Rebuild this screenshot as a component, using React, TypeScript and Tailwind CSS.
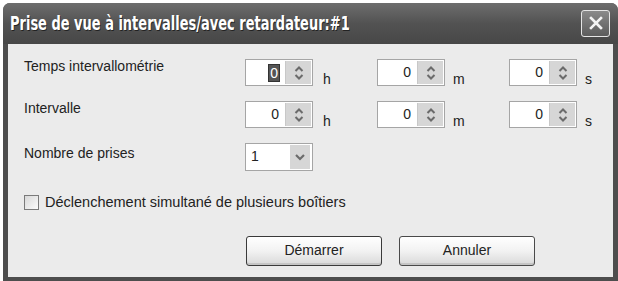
import { useState } from "react";

const ui = { fontFamily: '"Liberation Sans", Arial, sans-serif' };

const Spinner = ({ value, focused }: { value: string; focused?: boolean }) => (
  <div className="flex h-[27px] w-[68px] border border-[#a5a5a5] bg-white">
    <div className="flex flex-1 items-center justify-end pr-[5px] text-[14px] text-[#222]">
      {focused ? (
        <span className="bg-[#555] px-[1px] leading-[16px] text-white outline outline-1 outline-[#333]">{value}</span>
      ) : (
        value
      )}
    </div>
    <div className="m-[1px] flex w-[26px] flex-col items-center justify-center border-l border-[#c8c8c8] bg-[#d6d6d6]">
      <svg width="12" height="16" viewBox="0 0 12 16" fill="none" stroke="#6b6b6b" strokeWidth="2">
        <path d="M2.5 6 L6 2.5 L9.5 6" />
        <path d="M2.5 10 L6 13.5 L9.5 10" />
      </svg>
    </div>
  </div>
);

const Unit = ({ u }: { u: string }) => (
  <span className="mt-[13px] w-[10px] text-[14px] leading-none text-[#222]">{u}</span>
);

const SpinRow = ({ label, first }: { label: string; first?: boolean }) => (
  <div className="flex h-[27px] items-center">
    <span className="w-[221px] -translate-y-[6px] text-[14px] text-[#222]">{label}</span>
    <div className="flex gap-[10px]">
      <Spinner value="0" focused={first} />
      <Unit u="h" />
    </div>
    <div className="ml-[44px] flex gap-[8px]">
      <Spinner value="0" />
      <Unit u="m" />
    </div>
    <div className="ml-[46px] flex gap-[8px]">
      <Spinner value="0" />
      <Unit u="s" />
    </div>
  </div>
);

export default function App() {
  const [checked, setChecked] = useState(false);
  return (
    <div className="h-[281px] w-[618px] bg-white pl-[3px] pt-[3px]" style={ui}>
      <div className="flex h-[278px] w-[615px] flex-col overflow-hidden rounded-t-[7px] bg-[#4d4d4d]">
        <div className="flex h-[41px] items-center justify-between bg-gradient-to-b from-[#6e6e6e] via-[#525252] to-[#474747] pl-[7px] pr-[8px]">
          <span
            className="origin-left scale-x-[0.76] whitespace-nowrap text-[19px] font-bold text-white [text-shadow:1px_1px_0_#222]"
            style={{ fontFamily: '"Liberation Sans Narrow", "DejaVu Sans Condensed", sans-serif' }}
          >
            Prise de vue à intervalles/avec retardateur:#1
          </span>
          <div className="mb-[1px] flex h-[27px] w-[29px] items-center justify-center rounded-[3px] border border-[#e5e5e5] bg-gradient-to-b from-[#8a8a8a] to-[#5c5c5c]">
            <svg width="16" height="16" viewBox="0 0 16 16" stroke="#f2f2f2" strokeWidth="2.6" strokeLinecap="square">
              <path d="M3 3 L13 13 M13 3 L3 13" />
            </svg>
          </div>
        </div>
        <div className="mx-[5px] mb-[4px] flex flex-1 flex-col bg-[#ebebeb] pl-[16px] pt-[15px]">
          <div className="flex flex-col gap-[15px]">
            <SpinRow label="Temps intervallométrie" first />
            <SpinRow label="Intervalle" />
            <div className="flex h-[28px] items-center">
              <span className="w-[221px] -translate-y-[4px] text-[14px] text-[#222]">Nombre de prises</span>
              <div className="flex h-[28px] w-[68px] border border-[#a5a5a5] bg-white">
                <div className="flex flex-1 items-end pb-[3px] pl-[5px] text-[14px] text-[#222]">1</div>
                <div className="m-[1px] mr-[2px] flex w-[20px] items-center justify-center bg-[#d6d6d6]">
                  <svg width="12" height="10" viewBox="0 0 12 10" fill="none" stroke="#6b6b6b" strokeWidth="2.2">
                    <path d="M2 3 L6 7 L10 3" />
                  </svg>
                </div>
              </div>
            </div>
          </div>
          <label className="mt-[21px] flex items-center gap-[6px] text-[14.5px] text-[#222]">
            <span
              onClick={() => setChecked(!checked)}
              className="h-[15px] w-[15px] border border-[#7a7a7a] bg-gradient-to-br from-[#d8d8d8] to-[#fbfbfb] text-center text-[11px] leading-[13px]"
            >
              {checked ? "✓" : ""}
            </span>
            Déclenchement simultané de plusieurs boîtiers
          </label>
          <div className="mt-[22px] flex gap-[17px] pl-[222px]">
            <button className="h-[30px] w-[136px] rounded-[3px] border border-[#3a3a3a] bg-gradient-to-b from-[#ffffff] via-[#f2f2f2] to-[#d9d9d9] text-[14px] text-[#222] shadow-[inset_0_-2px_0_#c5c5c5]">
              Démarrer
            </button>
            <button className="h-[30px] w-[136px] rounded-[3px] border border-[#4a4a4a] bg-gradient-to-b from-[#ffffff] via-[#f2f2f2] to-[#d9d9d9] text-[14px] text-[#222] shadow-[inset_0_-2px_0_#c5c5c5]">
              Annuler
            </button>
          </div>
        </div>
      </div>
    </div>
  );
}
